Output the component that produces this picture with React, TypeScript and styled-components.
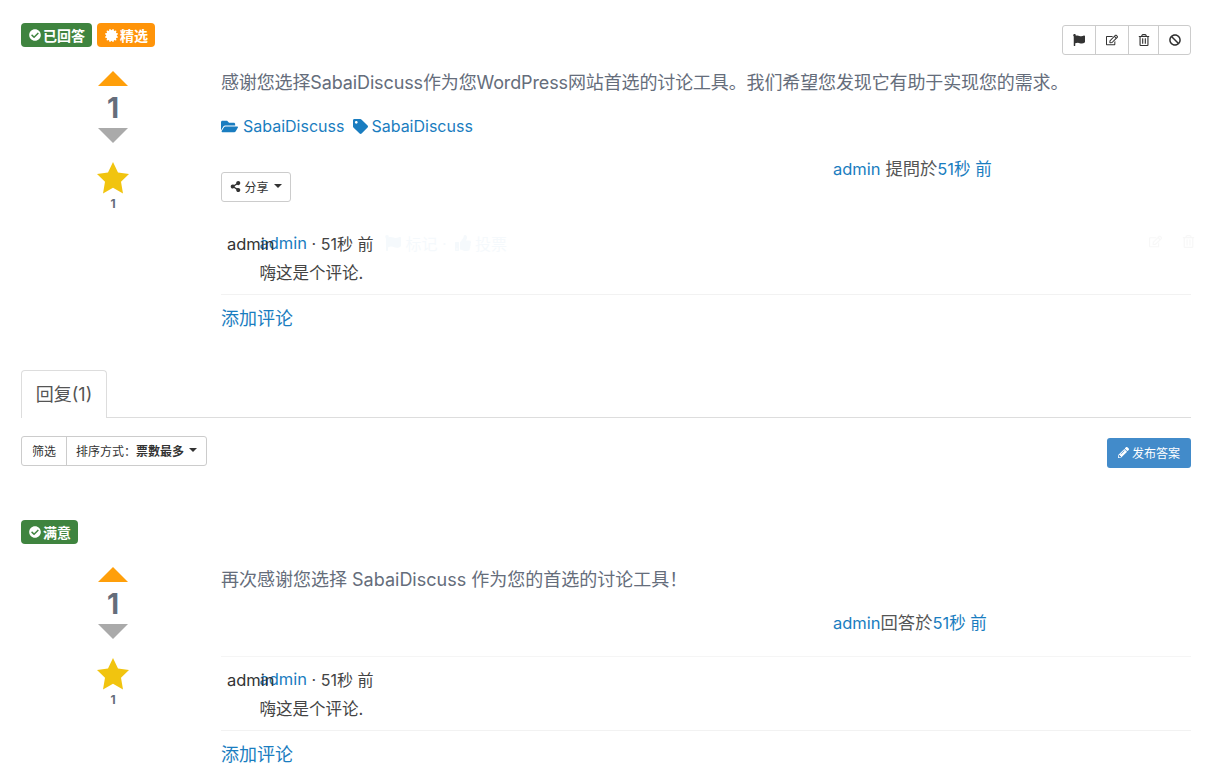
import React from "react";
import styled, { createGlobalStyle } from "styled-components";
import { FaCheckCircle, FaCertificate, FaFolderOpen, FaTag, FaShareAlt, FaFlag, FaRegEdit, FaRegTrashAlt, FaBan, FaPencilAlt, FaThumbsUp } from "react-icons/fa";

const FONT = `Inter, "Noto Sans CJK SC", sans-serif`;

const Global = createGlobalStyle`
  html, body { margin: 0; padding: 0; background: #fff; }
  body { font-family: ${FONT}; color: #333; font-size: 16px; }
  * { box-sizing: border-box; }
`;

const Page = styled.div`
  width: 1219px;
  height: 779px;
  overflow: hidden;
  padding: 23px 28px 0 21px;
`;

const TopBar = styled.div`
  display: flex;
  justify-content: space-between;
  align-items: flex-start;
  height: 40px;
`;

const Badges = styled.div`
  display: flex;
  gap: 5px;
`;

const Badge = styled.span<{ $bg: string }>`
  display: inline-flex;
  align-items: center;
  gap: 2px;
  height: 24px;
  padding: 0 7px 0 8px;
  border-radius: 4px;
  background: ${(p) => p.$bg};
  color: #fff;
  font-size: 14px;
  font-weight: 700;
  svg { font-size: 12px; }
`;

const Toolbar = styled.div`
  display: flex;
  margin-top: 2px;
  height: 30px;
  border: 1px solid #ccc;
  border-radius: 3px;
`;

const ToolButton = styled.span<{ $w: number }>`
  display: flex;
  align-items: center;
  justify-content: center;
  width: ${(p) => p.$w}px;
  font-size: 12px;
  color: #333;
  & + & { border-left: 1px solid #ccc; }
`;

const Post = styled.div`
  display: grid;
  grid-template-columns: 200px 970px;
`;

const VoteColumn = styled.div`
  display: flex;
  flex-direction: column;
  align-items: center;
  width: 184px;
  padding-top: 8px;
`;

const ArrowUp = styled.div`
  width: 0;
  height: 0;
  border-left: 15px solid transparent;
  border-right: 15px solid transparent;
  border-bottom: 15px solid #ff9f0a;
`;

const ArrowDown = styled.div`
  width: 0;
  height: 0;
  border-left: 15px solid transparent;
  border-right: 15px solid transparent;
  border-top: 15px solid #aaa;
`;

const VoteCount = styled.div`
  height: 42px;
  line-height: 44px;
  font-size: 28px;
  font-weight: 700;
  color: #656d7b;
`;

const StarIcon = styled.svg`
  display: block;
  margin-top: 19px;
  width: 32px;
  height: 32px;
  fill: #f1c40f;
`;

const StarCount = styled.div`
  margin-top: 1px;
  font-size: 12px;
  font-weight: 700;
  line-height: 18px;
  color: #656d7b;
`;

const Content = styled.div`
  min-width: 0;
`;

const Lead = styled.p`
  margin: 0;
  height: 40px;
  line-height: 40px;
  font-size: 18px;
  color: #656d7b;
  letter-spacing: -0.13px;
`;

const Tags = styled.div`
  display: flex;
  gap: 9px;
  margin-top: 8px;
  height: 30px;
  align-items: center;
`;

const TagLink = styled.a`
  display: inline-flex;
  align-items: center;
  gap: 3px;
  color: #1a7dc0;
  font-size: 16px;
  svg { font-size: 15px; }
`;

const FolderLink = styled(TagLink)`
  gap: 5px;
  svg { font-size: 17px; }
`;

const Meta = styled.div`
  display: grid;
  grid-template-columns: 612px 1fr;
  height: 59px;
  margin-top: 15px;
`;

const Share = styled.span`
  display: inline-flex;
  align-items: center;
  justify-content: center;
  gap: 3px;
  align-self: start;
  margin-top: 16px;
  width: 70px;
  height: 30px;
  padding-bottom: 2px;
  border: 1px solid #ccc;
  border-radius: 3px;
  color: #333;
  font-size: 12px;
  svg { font-size: 11px; }
`;

const Caret = styled.i`
  display: inline-block;
  width: 0;
  height: 0;
  margin-left: 2px;
  border-left: 4px solid transparent;
  border-right: 4px solid transparent;
  border-top: 4px solid #333;
`;

const Author = styled.div`
  grid-column: 2;
  grid-row: 1;
  color: #555;
  font-size: 17.3px;
  line-height: 26px;
  a { color: #1a7dc0; font-size: 16.5px; }
`;

const Comment = styled.div<{ $top: number }>`
  position: relative;
  margin-top: ${(p) => p.$top}px;
  padding: 0 0 6px 38.5px;
  border-bottom: 1px solid #f2f2f2;
`;

const CommentAvatar = styled.span`
  position: absolute;
  left: 6px;
  top: 0;
  font-size: 16.5px;
  line-height: 30px;
  color: #333;
`;

const CommentHead = styled.div`
  display: flex;
  align-items: center;
  height: 27px;
  margin-bottom: 2px;
  font-size: 16px;
  color: #444;
  white-space: pre;
  a { color: #1a7dc0; font-size: 16.5px; }
`;

const Ghost = styled.span`
  display: inline-flex;
  align-items: center;
  gap: 4px;
  margin-left: 12px;
  color: #1a7dc0;
  opacity: 0.04;
`;

const GhostTools = styled.span`
  display: flex;
  gap: 20px;
  position: absolute;
  right: -4px;
  top: 6px;
  font-size: 13px;
  color: #333;
  opacity: 0.03;
`;

const CommentBody = styled.div`
  font-size: 16.5px;
  line-height: 30px;
  color: #444;
`;

const AddComment = styled.a`
  display: block;
  margin-top: 10px;
  height: 28px;
  line-height: 28px;
  font-size: 18px;
  color: #1a7dc0;
`;

const Tabs = styled.div`
  display: flex;
  margin-top: 37px;
  height: 48px;
  border-bottom: 1px solid #ddd;
`;

const Tab = styled.div`
  width: 86px;
  height: 48px;
  border: 1px solid #ddd;
  border-bottom: 0;
  border-radius: 4px 4px 0 0;
  background: #fff;
  color: #555;
  font-size: 18px;
  line-height: 47px;
  text-align: center;
`;

const FilterRow = styled.div`
  display: flex;
  justify-content: space-between;
  align-items: flex-start;
  margin-top: 18px;
  height: 84px;
`;

const FilterGroup = styled.div`
  display: flex;
  height: 30px;
  border: 1px solid #ccc;
  border-radius: 3px;
  font-size: 12px;
  color: #333;
  align-items: stretch;
`;

const FilterCell = styled.span`
  display: flex;
  align-items: center;
  padding: 0 9px 2px;
  &:first-child { padding: 0 10px 2px; }
  & + & { border-left: 1px solid #ccc; }
  b { font-weight: 700; }
`;

const Publish = styled.span`
  display: inline-flex;
  align-items: center;
  gap: 3px;
  margin-top: 2px;
  height: 30px;
  padding: 0 11px 2px;
  background: #428bca;
  border-radius: 3px;
  color: #fff;
  font-size: 12px;
  svg { font-size: 11px; }
`;

const AnswerTop = styled.div`
  height: 39px;
`;

const AnswerLead = styled(Lead)`
  height: 30px;
  line-height: 30px;
  margin-top: 6px;
  letter-spacing: 0;
`;

const AnswerAuthor = styled(Author)`
  margin-left: 612px;
  margin-top: 15px;
  height: 28px;
`;

const Divider = styled.div`
  margin-top: 18px;
  border-top: 1px solid #f5f5f5;
`;

function Vote() {
  return (
    <VoteColumn>
      <ArrowUp />
      <VoteCount>1</VoteCount>
      <ArrowDown />
      <StarIcon viewBox="0 0 32 32">
        <polygon points="16,0 21,10.6 32,12 24,19.7 26,31.5 16,25.8 6,31.5 8,19.7 0,12 11,10.6" />
      </StarIcon>
      <StarCount>1</StarCount>
    </VoteColumn>
  );
}

export default function App() {
  return (
    <Page>
      <Global />
      <TopBar>
        <Badges>
          <Badge $bg="#3f843f"><FaCheckCircle />已回答</Badge>
          <Badge $bg="#ff9409"><FaCertificate size={13} />精选</Badge>
        </Badges>
        <Toolbar>
          <ToolButton $w={32}><FaFlag /></ToolButton>
          <ToolButton $w={33}><FaRegEdit /></ToolButton>
          <ToolButton $w={30}><FaRegTrashAlt /></ToolButton>
          <ToolButton $w={32}><FaBan /></ToolButton>
        </Toolbar>
      </TopBar>
      <Post>
        <Vote />
        <Content>
          <Lead>感谢您选择SabaiDiscuss作为您WordPress网站首选的讨论工具。我们希望您发现它有助于实现您的需求。</Lead>
          <Tags>
            <FolderLink><FaFolderOpen />SabaiDiscuss</FolderLink>
            <TagLink><FaTag />SabaiDiscuss</TagLink>
          </Tags>
          <Meta>
            <Share><FaShareAlt />分享<Caret /></Share>
            <Author><a>admin</a> 提問於<a>51秒 前</a></Author>
          </Meta>
          <Comment $top={14}>
            <CommentAvatar>admin</CommentAvatar>
            <CommentHead>
              <a>admin</a> · 51秒 前
              <Ghost><FaFlag />标记 · <FaThumbsUp />投票</Ghost>
            </CommentHead>
            <GhostTools><FaRegEdit /><FaRegTrashAlt /></GhostTools>
            <CommentBody>嗨这是个评论.</CommentBody>
          </Comment>
          <AddComment>添加评论</AddComment>
        </Content>
      </Post>
      <Tabs><Tab>回复(1)</Tab></Tabs>
      <FilterRow>
        <FilterGroup>
          <FilterCell>筛选</FilterCell>
          <FilterCell>排序方式：<b>票數最多</b>&nbsp;<Caret /></FilterCell>
        </FilterGroup>
        <Publish><FaPencilAlt />发布答案</Publish>
      </FilterRow>
      <AnswerTop>
        <Badge $bg="#3f843f"><FaCheckCircle />满意</Badge>
      </AnswerTop>
      <Post>
        <Vote />
        <Content>
          <AnswerLead>再次感谢您选择 SabaiDiscuss 作为您的首选的讨论工具！</AnswerLead>
          <AnswerAuthor><a>admin</a>回答於<a>51秒 前</a></AnswerAuthor>
          <Divider />
          <Comment $top={8}>
            <CommentAvatar>admin</CommentAvatar>
            <CommentHead><a>admin</a> · 51秒 前</CommentHead>
            <CommentBody>嗨这是个评论.</CommentBody>
          </Comment>
          <AddComment>添加评论</AddComment>
        </Content>
      </Post>
    </Page>
  );
}
